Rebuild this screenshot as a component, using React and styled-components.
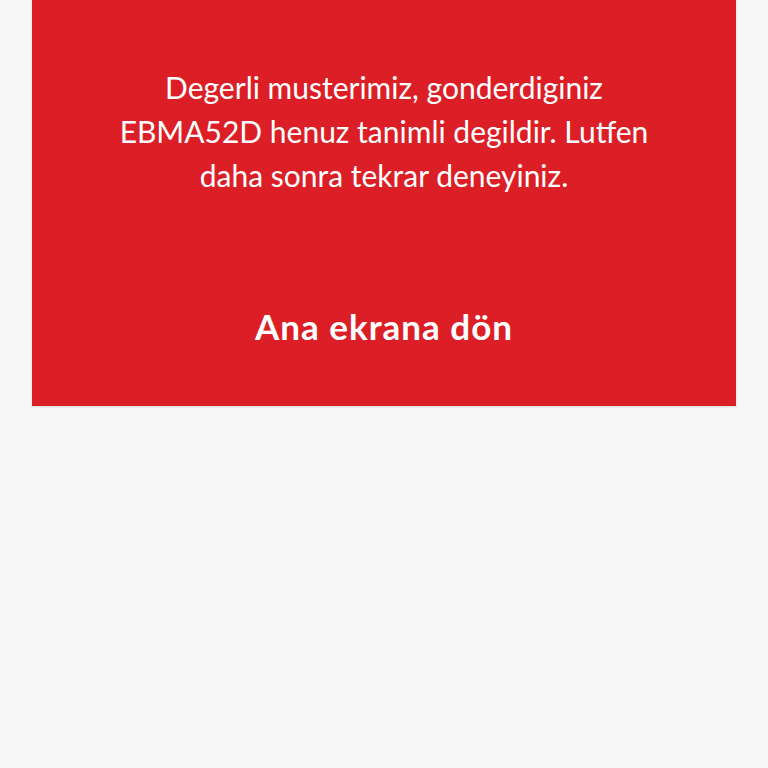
import React from 'react';
import styled, { createGlobalStyle } from 'styled-components';

const GlobalStyle = createGlobalStyle`
  html, body {
    margin: 0;
    padding: 0;
    background: #f7f7f7;
  }
  body {
    font-family: "Lato", "Liberation Sans", sans-serif;
  }
`;

const Page = styled.div`
  min-height: 768px;
  padding: 0 32px;
  box-sizing: border-box;
`;

const Card = styled.div`
  background: #dc1f26;
  height: 406px;
  display: flex;
  flex-direction: column;
  align-items: center;
  box-shadow: 0 1px 2px rgba(0, 0, 0, 0.12);
  box-sizing: border-box;
  padding-top: 65px;
`;

const Message = styled.p`
  margin: 0;
  width: 540px;
  color: #fff;
  font-size: 30px;
  line-height: 44px;
  text-align: center;
  font-weight: 400;
`;

const BackLink = styled.a`
  margin-top: 108px;
  color: #fff;
  font-size: 35px;
  font-weight: 700;
  letter-spacing: 1px;
  text-decoration: none;
  cursor: pointer;
`;

export default function App() {
  return (
    <>
      <GlobalStyle />
      <Page>
        <Card>
          <Message>
            Degerli musterimiz, gonderdiginiz EBMA52D henuz tanimli degildir. Lutfen daha sonra tekrar deneyiniz.
          </Message>
          <BackLink>Ana ekrana dön</BackLink>
        </Card>
      </Page>
    </>
  );
}
